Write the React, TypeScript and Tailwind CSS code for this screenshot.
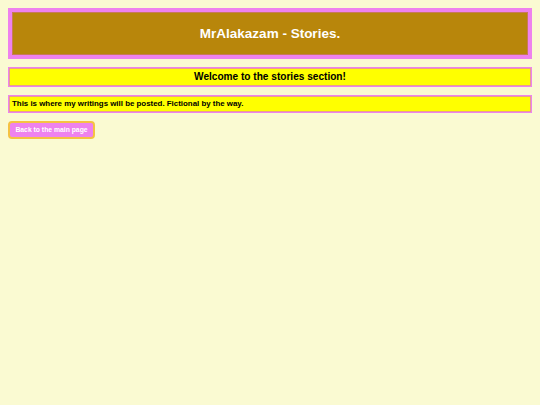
export default function App() {
  return (
    <div
      className="min-h-[405px] w-full bg-[#fafad2] px-[8px] pt-[8px]"
      style={{ fontFamily: '"Liberation Sans", Arial, sans-serif' }}
    >
      <div className="flex h-[51px] items-center justify-center border-[4px] border-[#ee82ee] bg-[#b8860b] shadow-[inset_0_0_0_1px_#c77a5a]">
        <h1 className="text-[13.5px] font-bold leading-none text-white">MrAlakazam - Stories.</h1>
      </div>
      <div className="mt-[8px] flex h-[20px] items-center justify-center border border-[#ee82ee] bg-[#ffff00] shadow-[inset_0_0_0_1px_#e8a08c]">
        <h2 className="text-[10.1px] font-bold leading-none text-black">Welcome to the stories section!</h2>
      </div>
      <div className="mt-[8px] flex h-[18px] items-center border border-[#ee82ee] bg-[#ffff00] px-[3px] shadow-[inset_0_0_0_1px_#e8a08c]">
        <p className="text-[7.9px] font-bold leading-none text-black">
          This is where my writings will be posted. Fictional by the way.
        </p>
      </div>
      <div className="mt-[8px]">
        <button className="flex h-[18px] w-[87px] items-center justify-center rounded-[4px] border-[2px] border-[#f5c242] bg-[#ee82ee] text-[6.8px] font-bold leading-none text-white">
          Back to the main page
        </button>
      </div>
    </div>
  );
}
